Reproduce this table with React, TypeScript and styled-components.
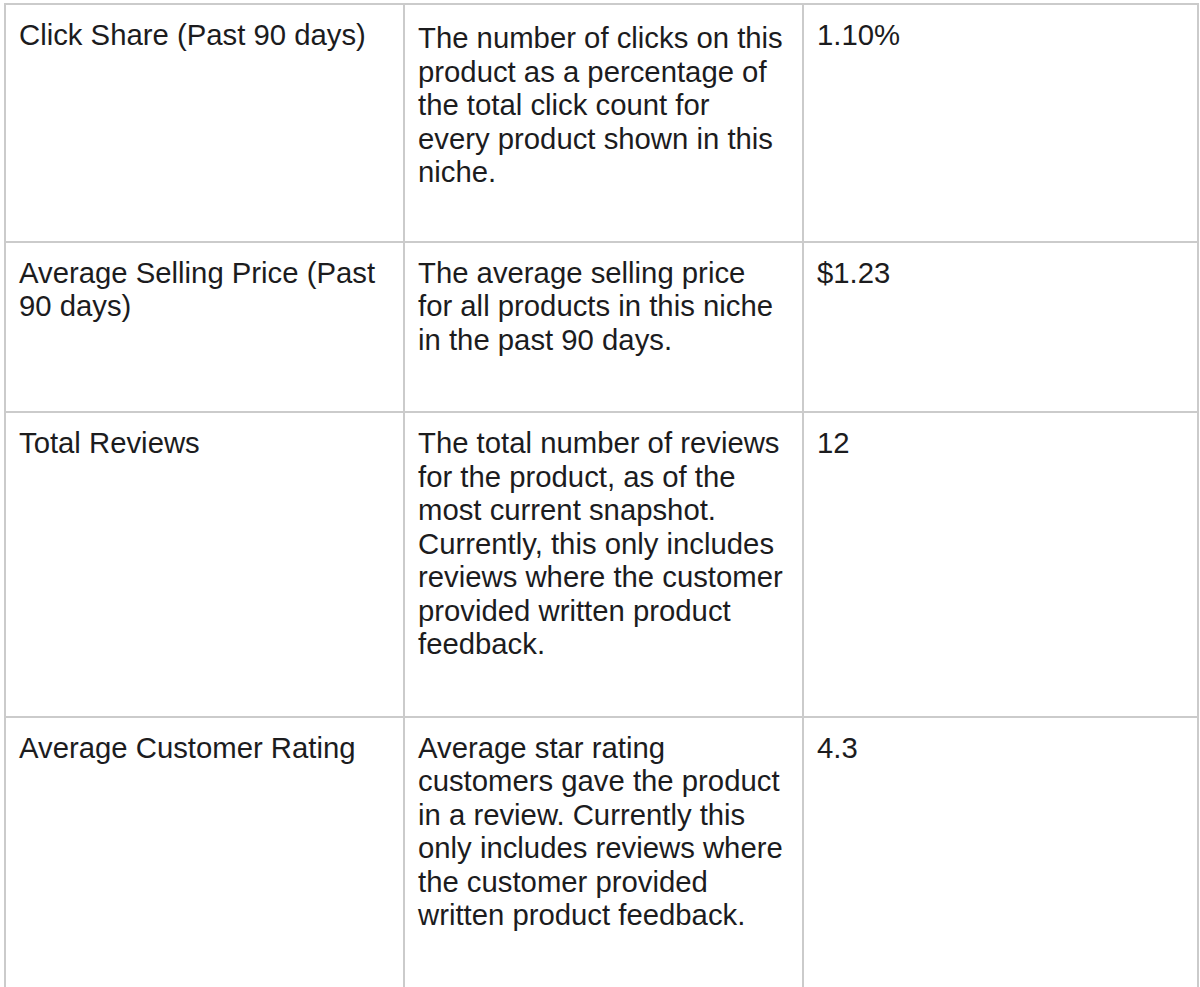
import React from "react";
import styled, { createGlobalStyle } from "styled-components";

const Global = createGlobalStyle`
  html, body {
    margin: 0;
    padding: 0;
    background: #ffffff;
  }
  body {
    font-family: "Liberation Sans", Arial, sans-serif;
    overflow: hidden;
  }
`;

const Page = styled.div`
  padding: 3px 0 0 4px;
  height: 987px;
  box-sizing: border-box;
  overflow: hidden;
`;

const Table = styled.table`
  border-collapse: collapse;
  table-layout: fixed;
  width: 1193px;
`;

const Col = styled.col<{ $w: number }>`
  width: ${(p) => p.$w}px;
`;

const Cell = styled.td<{ $offset?: number }>`
  border: 2px solid #cbcbcb;
  vertical-align: top;
  padding: ${(p) => 13 + (p.$offset ?? 0)}px 16px ${(p) => 55 - (p.$offset ?? 0)}px 13px;
  font-size: 29.3px;
  line-height: 33.5px;
  color: #1c1c1e;
  word-wrap: break-word;
`;

const rows: [string, string, string][] = [
  [
    "Click Share (Past 90 days)",
    "The number of clicks on this product as a percentage of the total click count for every product shown in this niche.",
    "1.10%",
  ],
  [
    "Average Selling Price (Past 90 days)",
    "The average selling price for all products in this niche in the past 90 days.",
    "$1.23",
  ],
  [
    "Total Reviews",
    "The total number of reviews for the product, as of the most current snapshot. Currently, this only includes reviews where the customer provided written product feedback.",
    "12",
  ],
  [
    "Average Customer Rating",
    "Average star rating customers gave the product in a review. Currently this only includes reviews where the customer provided written product feedback.",
    "4.3",
  ],
];

export default function App() {
  return (
    <>
      <Global />
      <Page>
        <Table>
          <colgroup>
            <Col $w={399} />
            <Col $w={399} />
            <Col $w={395} />
          </colgroup>
          <tbody>
            {rows.map(([a, b, c], i) => (
              <tr key={a}>
                <Cell>{a}</Cell>
                <Cell $offset={i === 0 ? 3 : 0}>{b}</Cell>
                <Cell>{c}</Cell>
              </tr>
            ))}
          </tbody>
        </Table>
      </Page>
    </>
  );
}
